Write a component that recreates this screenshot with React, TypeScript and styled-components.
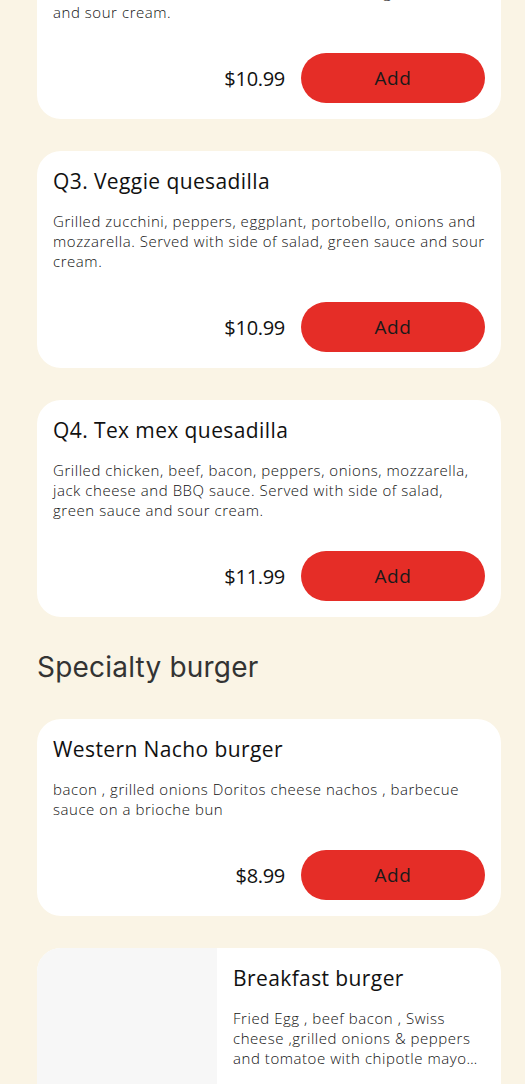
import React from "react";
import styled, { createGlobalStyle } from "styled-components";

const Global = createGlobalStyle`
  html, body { margin: 0; padding: 0; background: #faf4e5; }
  body { font-family: "Open Sans", "Noto Sans", sans-serif; color: #111; overflow: hidden; }
`;

const Page = styled.div`
  width: 525px;
  height: 1084px;
  overflow: hidden;
  background: #faf4e5;
`;

const Column = styled.div`
  margin-top: -98px;
  padding: 0 24px 0 37px;
  display: flex;
  flex-direction: column;
`;

const Section = styled.section`
  display: flex;
  flex-direction: column;
  gap: 32px;
`;

const SectionTitle = styled.h2`
  margin: 32px 0 0;
  height: 36px;
  font-family: "Inter", sans-serif;
  font-weight: 400;
  font-size: 28px;
  line-height: 36px;
  color: #333;
  letter-spacing: 0.2px;
`;

const SectionGap = styled.div`
  height: 34px;
`;

const Card = styled.div`
  width: 464px;
  background: #fff;
  border-radius: 24px;
  display: flex;
  overflow: hidden;
`;

const ImageBox = styled.div`
  width: 180px;
  flex-shrink: 0;
  background: #f7f7f7;
`;

const Body = styled.div`
  flex: 1;
  padding: 16px;
  display: flex;
  flex-direction: column;
  min-width: 0;
`;

const Title = styled.h3`
  margin: 0;
  font-size: 21px;
  line-height: 28px;
  font-weight: 500;
  letter-spacing: 0.4px;
  color: #111;
`;

const Desc = styled.p<{ $clamp?: boolean }>`
  margin: 16px 0 0;
  font-size: 15px;
  line-height: 20px;
  font-weight: 300;
  letter-spacing: 0.55px;
  color: #111;
  ${(p) =>
    p.$clamp
      ? `display: -webkit-box; -webkit-line-clamp: 3; -webkit-box-orient: vertical; overflow: hidden;`
      : ""}
`;

const Footer = styled.div`
  margin-top: 31px;
  display: flex;
  justify-content: flex-end;
  align-items: center;
  gap: 16px;
`;

const Price = styled.span`
  font-size: 20px;
  font-weight: 400;
  letter-spacing: -0.3px;
  color: #111;
`;

const AddButton = styled.button`
  width: 184px;
  height: 50px;
  border: none;
  border-radius: 25px;
  background: #e52d27;
  color: #1a1a1a;
  font-family: inherit;
  font-size: 19px;
  font-weight: 500;
  letter-spacing: 0.5px;
  cursor: pointer;
`;

type Item = { title: string; desc: string; price: string; image?: boolean };

const quesadillas: Item[] = [
  {
    title: "Q2. Chicken quesadilla",
    desc: "Grilled chicken, peppers, onions, mushrooms and mozzarella cheese. Served with side of salad, green sauce and sour cream.",
    price: "$10.99",
  },
  {
    title: "Q3. Veggie quesadilla",
    desc: "Grilled zucchini, peppers, eggplant, portobello, onions and mozzarella. Served with side of salad, green sauce and sour cream.",
    price: "$10.99",
  },
  {
    title: "Q4. Tex mex quesadilla",
    desc: "Grilled chicken, beef, bacon, peppers, onions, mozzarella, jack cheese and BBQ sauce. Served with side of salad, green sauce and sour cream.",
    price: "$11.99",
  },
];

const burgers: Item[] = [
  {
    title: "Western Nacho burger",
    desc: "bacon , grilled onions Doritos cheese nachos , barbecue sauce on a brioche bun",
    price: "$8.99",
  },
  {
    title: "Breakfast burger",
    desc: "Fried Egg , beef bacon , Swiss cheese ,grilled onions & peppers and tomatoe with chipotle mayo sauce on a brioche bun",
    price: "$9.99",
    image: true,
  },
];

function MenuCard({ item }: { item: Item }) {
  return (
    <Card>
      {item.image && <ImageBox />}
      <Body>
        <Title>{item.title}</Title>
        <Desc $clamp={item.image}>{item.desc}</Desc>
        <Footer>
          <Price>{item.price}</Price>
          <AddButton>Add</AddButton>
        </Footer>
      </Body>
    </Card>
  );
}

export default function App() {
  return (
    <Page>
      <Global />
      <Column>
        <Section>
          {quesadillas.map((q) => (
            <MenuCard key={q.title} item={q} />
          ))}
        </Section>
        <SectionTitle>Specialty burger</SectionTitle>
        <SectionGap />
        <Section>
          {burgers.map((b) => (
            <MenuCard key={b.title} item={b} />
          ))}
        </Section>
      </Column>
    </Page>
  );
}
